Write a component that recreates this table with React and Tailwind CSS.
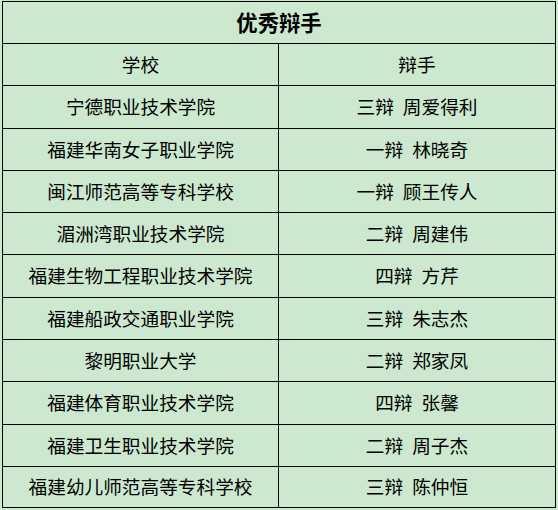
const rows = [
  ['宁德职业技术学院', '三辩', '周爱得利', 'h-[43px]'],
  ['福建华南女子职业学院', '一辩', '林晓奇', 'h-[42px]'],
  ['闽江师范高等专科学校', '一辩', '顾王传人', 'h-[42px]'],
  ['湄洲湾职业技术学院', '二辩', '周建伟', 'h-[42px]'],
  ['福建生物工程职业技术学院', '四辩', '方芹', 'h-[43px]'],
  ['福建船政交通职业学院', '三辩', '朱志杰', 'h-[42px]'],
  ['黎明职业大学', '二辩', '郑家凤', 'h-[42px]'],
  ['福建体育职业技术学院', '四辩', '张馨', 'h-[43px]'],
  ['福建卫生职业技术学院', '二辩', '周子杰', 'h-[42px]'],
  ['福建幼儿师范高等专科学校', '三辩', '陈仲恒', 'h-[41px]'],
]

export default function App() {
  return (
    <div className="w-[558px] h-[510px] bg-[#cce8cf] pl-[2px] pt-[1px] text-black font-['Noto_Sans_CJK_SC','Noto_Sans',sans-serif]">
      <div className="w-[554px] border border-black flex flex-col">
        <div className="h-[41px] flex items-center justify-center pb-[2px] text-[21.33px] font-bold">
          优秀辩手
        </div>
        <div className="h-[42px] flex border-t border-black text-[18.67px]">
          <div className="w-[276px] flex items-center justify-center pb-[2px] border-r border-black">学校</div>
          <div className="flex-1 flex items-center justify-center pb-[2px]">辩手</div>
        </div>
        {rows.map((r, i) => (
          <div key={i} className={`${r[3]} flex border-t border-black text-[18.67px]`}>
            <div className="w-[276px] flex items-center justify-center pb-[2px] border-r border-black">{r[0]}</div>
            <div className="flex-1 flex items-center justify-center pb-[2px]">
              <span>{r[1]}</span>
              <span className="inline-block w-[9px]"></span>
              <span>{r[2]}</span>
            </div>
          </div>
        ))}
      </div>
    </div>
  )
}
